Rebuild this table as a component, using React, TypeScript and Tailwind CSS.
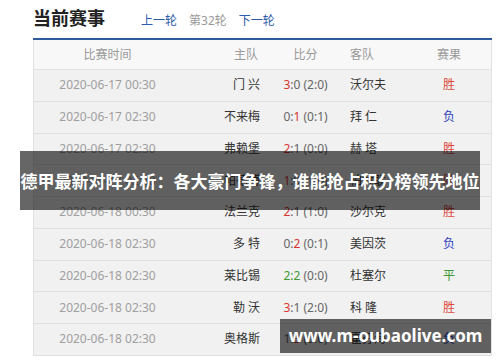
import { FC, ReactNode } from 'react';

type Match = {
  time: string;
  home: string;
  score: ReactNode;
  away: string;
  result: '胜' | '负' | '平';
};

const red = 'text-[#d8352f]';
const green = 'text-[#3f9a36]';

const matches: Match[] = [
  { time: '2020-06-17 00:30', home: '门 兴', score: <><span className={red}>3</span>:0 (2:0)</>, away: '沃尔夫', result: '胜' },
  { time: '2020-06-17 02:30', home: '不来梅', score: <>0:<span className={red}>1</span> (0:1)</>, away: '拜 仁', result: '负' },
  { time: '2020-06-17 02:30', home: '弗赖堡', score: <><span className={red}>2</span>:1 (0:0)</>, away: '赫 塔', result: '胜' },
  { time: '2020-06-17 02:30', home: '帕德博', score: <><span className={red}>1</span>:0 (1:0)</>, away: '柏林联', result: '胜' },
  { time: '2020-06-18 00:30', home: '法兰克', score: <><span className={red}>2</span>:1 (1:0)</>, away: '沙尔克', result: '胜' },
  { time: '2020-06-18 02:30', home: '多 特', score: <>0:<span className={red}>2</span> (0:1)</>, away: '美因茨', result: '负' },
  { time: '2020-06-18 02:30', home: '莱比锡', score: <><span className={green}>2:2</span> (0:0)</>, away: '杜塞尔', result: '平' },
  { time: '2020-06-18 02:30', home: '勒 沃', score: <><span className={red}>3</span>:1 (2:0)</>, away: '科 隆', result: '胜' },
  { time: '2020-06-18 02:30', home: '奥格斯', score: <>1:<span className={red}>3</span> (0:0)</>, away: '霍芬海', result: '负' },
];

const resultColor = {
  胜: 'text-[#e0453c]',
  负: 'text-[#2f3fbf]',
  平: 'text-[#3f9a36]',
};

const cols = 'grid grid-cols-[147px_86px_77px_63px_1fr] items-center';

const App: FC = () => {
  return (
    <div className="relative w-[500px] h-[362px] overflow-hidden bg-white font-['Noto_Sans','Noto_Sans_CJK_SC',sans-serif]">
      <div className="flex items-baseline h-[38px] pt-[6px] pl-[33px]">
        <h2 className="text-[18px] leading-[24px] font-bold text-[#222]">当前赛事</h2>
        <span className="ml-[36px] text-[12px] text-[#2c5aa8]">上一轮</span>
        <span className="ml-3 text-[12px] text-[#999]">第32轮</span>
        <span className="ml-3 text-[12px] text-[#2c5aa8]">下一轮</span>
      </div>
      <div className="ml-[33px] mr-[8px] h-[2px] bg-[#2d5b9c]" />

      <div className="ml-[33px] mr-[8px] border-x border-[#e2e2e2] text-[12px]">
        <div className={`${cols} h-[30px] bg-[#f8f8f8] border-b border-[#e4e4e4] text-[#999]`}>
          <span className="text-center">比赛时间</span>
          <span className="text-right pr-[9px]">主队</span>
          <span className="text-center">比分</span>
          <span className="pl-[6px]">客队</span>
          <span className="text-center">赛果</span>
        </div>
        {matches.map((m, i) => (
          <div key={i} className={`${cols} h-[31.75px] bg-[#f1f1f1] border-b border-[#e0e0e0]`}>
            <span className="text-center text-[#a0a0a0]">{m.time}</span>
            <span className="text-right pr-[7px] text-[#333] whitespace-pre">{m.home}</span>
            <span className="text-center text-[#666]">{m.score}</span>
            <span className="pl-[6px] text-[#333] whitespace-pre">{m.away}</span>
            <span className={`text-center ${resultColor[m.result]}`}>{m.result}</span>
          </div>
        ))}
      </div>

      <div className="absolute left-[20px] top-[151px] w-[460px] h-[59px] bg-black/60 flex items-center justify-center">
        <span className="text-white font-bold text-[17px] whitespace-nowrap font-['Noto_Sans_CJK_SC',sans-serif]">
          德甲最新对阵分析：各大豪门争锋，谁能抢占积分榜领先地位
        </span>
      </div>

      <div className="absolute left-[280px] top-[319px] w-[211px] h-[34px] bg-black/60 flex items-center justify-center">
        <span className="text-white font-bold text-[17px] whitespace-nowrap">www.m-oubaolive.com</span>
      </div>
    </div>
  );
};

export default App;
